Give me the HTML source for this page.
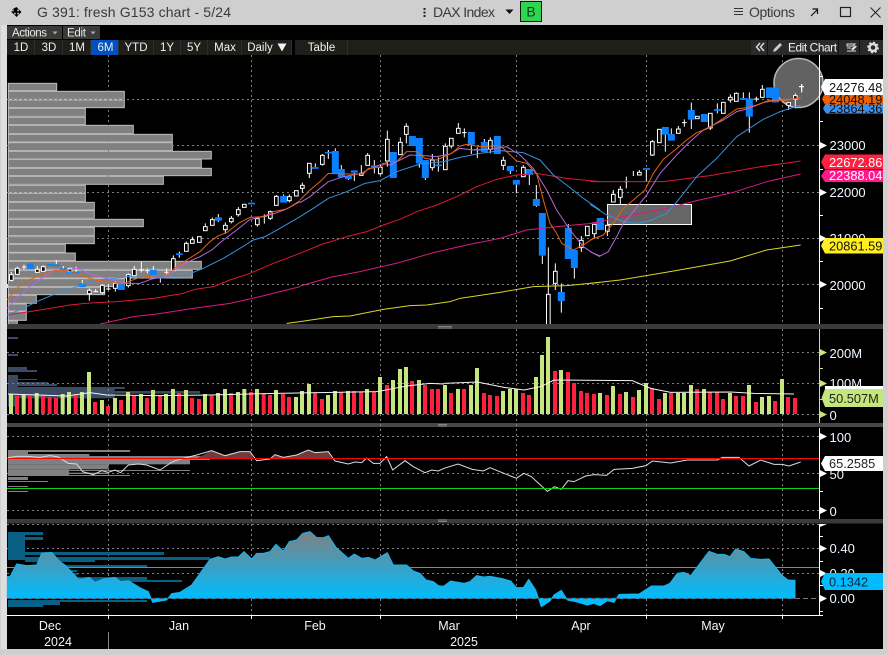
<!DOCTYPE html>
<html><head><meta charset="utf-8"><style>
html,body{margin:0;padding:0;background:#cfcfcf}
svg{display:block}
text{font-family:"Liberation Sans",Arial,sans-serif}
.tb{font-size:11.5px;fill:#f0f0f0;text-anchor:middle}
.ax{font-size:13px;fill:#eef6ff}
.dt{font-size:12.5px;fill:#f4f4f4;text-anchor:middle}
.tg{font-size:12.8px}
.gr line{stroke:#808080;stroke-width:1;stroke-dasharray:2 3}
g.h rect{fill:#000;stroke:#fff;stroke-width:3;width:11px}
.w{fill:none;stroke:#fff;stroke-width:3}
.b{fill:none;stroke:#0a80ff;stroke-width:21}
.bt{fill:none;stroke:#0a80ff;stroke-width:5}
.ma{fill:none;stroke-width:3;stroke-linejoin:round}
.o{stroke:#e8600c}.p{stroke:#b468dc}.u{stroke:#3a90dc}.r{stroke:#dc1838}.k{stroke:#d81a80}.y{stroke:#d8d820}
.pf rect{fill:#808080;stroke:#bcbcbc;stroke-width:3}
</style></head><body>
<svg width="888" height="655" viewBox="0 0 888 655" xmlns="http://www.w3.org/2000/svg">
<defs>
<linearGradient id="ag" gradientUnits="userSpaceOnUse" x1="0" y1="50" x2="0" y2="250"><stop offset="0" stop-color="#808080"/><stop offset="1" stop-color="#00bcff"/></linearGradient>
</defs>
<!-- window -->
<rect width="888" height="655" fill="#cfcfcf"/>
<rect x="1" y="25" width="6" height="624" fill="#dedede"/>
<rect x="7" y="25" width="876" height="624" fill="#000"/>
<!-- title bar -->
<g fill="#000"><path d="M16.5 7.5l2.5 2.6h-1.7v1.6h1.6V10l2.6 2.5L18.9 15v-1.7h-1.6v1.6h1.7l-2.5 2.6-2.5-2.6h1.7v-1.6h-1.6V15l-2.6-2.5L12.100 10v1.700h1.600V10h-1.700z" transform="translate(0 -.5)"/></g>
<text x="37" y="17" font-size="14" fill="#3a3a3a" textLength="194">G 391: fresh G153 chart - 5/24</text>
<rect x="423.500" y="8" width="2" height="2" fill="#222"/><rect x="423.500" y="11.500" width="2" height="2" fill="#222"/><rect x="423.500" y="15" width="2" height="2" fill="#222"/>
<text x="433" y="17" font-size="14" fill="#3a3a3a" textLength="62">DAX Index</text>
<path d="M505.500 9.500h8l-4 4.500z" fill="#111"/>
<rect x="520.500" y="1.500" width="21" height="20" fill="#2ed650" stroke="#0a1a0a"/>
<text x="531" y="16.500" font-size="14" fill="#1a3a20" text-anchor="middle">B</text>
<path d="M734 8.500h9M734 11.500h9M734 14.500h9" stroke="#333" stroke-width="1"/>
<text x="749" y="17" font-size="14" fill="#3a3a3a" textLength="46">Options</text>
<path d="M811 16l6-6M812.500 9h5v5" stroke="#111" fill="none" stroke-width="1.200"/>
<rect x="840.500" y="7.500" width="10" height="9" fill="none" stroke="#222" stroke-width="1.200"/>
<path d="M870.500 7.500l10 10M880.500 7.500l-10 10" stroke="#222" stroke-width="1"/>
<!-- toolbar row 1 -->
<rect x="7" y="26" width="55" height="13" fill="#3a3a3a"/><rect x="63" y="26" width="37" height="13" fill="#3a3a3a"/>
<text x="12" y="36.500" font-size="11.500" fill="#e8e8e8" textLength="35">Actions</text><path d="M52.500 31.500h5l-2.500 3z" fill="#aaa"/>
<text x="67" y="36.500" font-size="11.500" fill="#e8e8e8" textLength="19">Edit</text><path d="M90.500 31.500h5l-2.500 3z" fill="#aaa"/>
<!-- toolbar row 2 -->
<rect x="7" y="40" width="876" height="15" fill="#1e1e1a"/>
<rect x="91" y="40" width="28" height="15" fill="#0050c0"/>
<path d="M34.500 40v15M62.500 40v15M90.500 40v15M118.500 40v15M153.500 40v15M180.500 40v15M207.500 40v15M241.500 40v15M291.500 40v15M294.500 40v15M347.500 40v15" stroke="#2e2e2e"/>
<rect x="292" y="40" width="3" height="15" fill="#000"/>
<text class="tb" x="21" y="51">1D</text><text class="tb" x="49" y="51">3D</text><text class="tb" x="77" y="51">1M</text><text class="tb" x="105.500" y="51">6M</text><text class="tb" x="136" y="51">YTD</text><text class="tb" x="167" y="51">1Y</text><text class="tb" x="194" y="51">5Y</text><text class="tb" x="225" y="51">Max</text><text class="tb" x="260" y="51">Daily</text>
<path d="M277.500 43.500h9l-4.500 8z" fill="#f0f0f0"/>
<text class="tb" x="321.500" y="51">Table</text>
<rect x="751" y="40" width="132" height="15" fill="#2a2a28"/>
<path d="M767.500 40v15M838.500 40v15M859.500 40v15" stroke="#111"/>
<path d="M760 43l-3.500 4 3.500 4M764 43l-3.500 4 3.500 4" fill="none" stroke="#d8d8d8" stroke-width="1.500"/>
<path d="M773 52l1-3 6-6 2 2-6 6z" fill="#ccc"/>
<text x="788" y="51.500" font-size="11.800" fill="#f4f4f4" textLength="49">Edit Chart</text>
<path d="M847 44h8l-2 2h-6zM847 48h4M847 51h9" stroke="#ddd" fill="none"/><path d="M851 49l4-3.500 2 1-4 4z" fill="#ddd"/>
<circle cx="873" cy="47.500" r="3.500" fill="none" stroke="#ddd" stroke-width="2.500"/><circle cx="873" cy="47.500" r="5" fill="none" stroke="#ddd" stroke-width="1.800" stroke-dasharray="2 1.900"/>

<!-- MAIN PANE -->
<g class="pf" transform="translate(0 60) scale(.33333)">
<rect x="25" y="70" width="145" height="22"/><rect x="25" y="94" width="348" height="24"/><rect x="25" y="120" width="348" height="23"/><rect x="25" y="145" width="231" height="24"/><rect x="25" y="172" width="231" height="22"/><rect x="25" y="196" width="375" height="25"/><rect x="25" y="223" width="492" height="23"/><rect x="25" y="248" width="492" height="24"/><rect x="25" y="274" width="609" height="23"/><rect x="25" y="298" width="579" height="25"/><rect x="25" y="325" width="609" height="22"/><rect x="25" y="349" width="465" height="24"/><rect x="25" y="376" width="231" height="22"/><rect x="25" y="400" width="231" height="25"/><rect x="25" y="427" width="258" height="23"/><rect x="25" y="452" width="258" height="23"/><rect x="25" y="478" width="405" height="22"/><rect x="25" y="502" width="258" height="25"/><rect x="25" y="530" width="258" height="21"/><rect x="25" y="553" width="171" height="24"/><rect x="25" y="579" width="201" height="23"/><rect x="25" y="604" width="579" height="24"/><rect x="25" y="631" width="552" height="23"/><rect x="25" y="656" width="348" height="24"/><rect x="25" y="682" width="289" height="22"/><rect x="25" y="706" width="84" height="24"/><rect x="25" y="732" width="54" height="21"/><rect x="25" y="755" width="54" height="26"/><rect x="25" y="783" width="27" height="10"/>
</g>
<g class="gr">
<line x1="7" x2="819" y1="99.500" y2="99.500"/><line x1="7" x2="819" y1="145.500" y2="145.500"/><line x1="7" x2="819" y1="192.500" y2="192.500"/><line x1="7" x2="819" y1="238.500" y2="238.500"/><line x1="7" x2="819" y1="284.500" y2="284.500"/>
<line x1="108.500" x2="108.500" y1="55" y2="324"/><line x1="251.500" x2="251.500" y1="55" y2="324"/><line x1="380.500" x2="380.500" y1="55" y2="324"/><line x1="516.500" x2="516.500" y1="55" y2="324"/><line x1="646.500" x2="646.500" y1="55" y2="324"/><line x1="782.500" x2="782.500" y1="55" y2="324"/>
</g>
<rect x="607.500" y="204.500" width="84" height="20" fill="#666" stroke="#fff"/>
<circle cx="798.500" cy="83" r="24.500" fill="#626262" stroke="#b8b8b8" stroke-width="1.500"/>

<!-- candles A -->
<g transform="translate(0 60) scale(.33333)">
<path class="w" d="M22 672V684M34 636V664M52 620V643M72 614V628M66 621H80M112 618V637M130 616V634M169 600V612M190 618V630M228 620V640M247 660V670M268 685V722M287 687V697M280 695H294M307 672V702M325 672V690M318 687H332M346 665V695M385 640V683M403 618V647M424 605V637M418 630H432M442 625V640M436 632H448M460 618V630M481 655V668M500 625V645M493 637H506M520 586V632M538 575V593M559 545V574M577 530V550M616 490V512M637 473V496M655 462V486M676 487V521M694 468V490M715 441V470M772 470V500M793 463V491M786 469H800M811 452V480M829 405V436M851 403V408M868 403V427"/>
<path class="b" d="M91 610V627M364 673V690M460 630V645M655 472V482M851 408V428M247 670V681"/>
<path class="bt" d="M141 614.500H160M159 616.500H180M180 627.500H200M199 638H238M471 652.500H492M528 582.500H548M744 430.500H765"/>
<g class="h"><rect x="28.500" y="644" height="17"/><rect x="46.500" y="625" height="18"/><rect x="106.500" y="628" height="9"/><rect x="124.500" y="620" height="14"/><rect x="204.500" y="625" height="10"/><rect x="262.500" y="691" height="10"/><rect x="301.500" y="676" height="22"/><rect x="340.500" y="670" height="15"/><rect x="379.500" y="644" height="33"/><rect x="397.500" y="628" height="19"/><rect x="514.500" y="596" height="36"/><rect x="553.500" y="550" height="24"/><rect x="571.500" y="539" height="11"/><rect x="592.500" y="530" height="17"/><rect x="610.500" y="500" height="12"/><rect x="631.500" y="479" height="17"/><rect x="670.500" y="496" height="13"/><rect x="688.500" y="475" height="10"/><rect x="709.500" y="449" height="15"/><rect x="727.500" y="433" height="9"/><rect x="766.500" y="476" height="18"/><rect x="805.500" y="455" height="20"/><rect x="823.500" y="409" height="27"/><rect x="862.500" y="410" height="12"/><rect x="883.500" y="392" height="16"/></g>
</g>
<!-- candles B -->
<g transform="translate(300 60) scale(.33333)">
<path class="w" d="M7 368V398M28 310V354M46 310V321M67 282V317M85 270V297M106 265V273M124 315V327M145 357V360M163 338V363M184 315V340M203 279V316M223 300V340M241 315V346M262 212V320M280 354V354M301 232V284M319 190V250M358 310V323M376 354V360M397 282V332M415 292V335M436 250V329M454 235V265M475 189V220M493 205V232M486 218H500M514 254V282M532 262V294M553 237V246M571 232V280M610 290V330M631 333V342M649 374V400M670 315V350M688 345V375M709 375V441M727 587V612M745 562V795M766 610V690M784 670V758M805 492V503M823 624V656M844 528V576M883 521V534"/>
<path class="b" d="M106 273V340M124 327V352M145 348V357M163 331V338M280 276V354M337 228V258M358 234V310M376 300V354M514 216V254M553 246V276M592 228V282M631 318V333M649 360V374M688 327V345M709 417V438M727 459V587M784 696V723M805 503V597M823 570V624M901 474V510"/>
<path class="bt" d="M36 324H56M75 278H96M213 319H234M405 316H426M522 269H542"/>
<g class="h"><rect x="1.500" y="376" height="9"/><rect x="22.500" y="310" height="30"/><rect x="61.500" y="286" height="27"/><rect x="178.500" y="340" height="6"/><rect x="197.500" y="286" height="30"/><rect x="235.500" y="322" height="19"/><rect x="256.500" y="238" height="65"/><rect x="295.500" y="247" height="37"/><rect x="313.500" y="199" height="24"/><rect x="391.500" y="300" height="23"/><rect x="430.500" y="259" height="70"/><rect x="448.500" y="235" height="23"/><rect x="469.500" y="205" height="15"/><rect x="565.500" y="241" height="27"/><rect x="604.500" y="301" height="15"/><rect x="664.500" y="322" height="28"/><rect x="739.500" y="703" height="92"/><rect x="760.500" y="634" height="36"/><rect x="838.500" y="541" height="22"/><rect x="856.500" y="499" height="28"/><rect x="877.500" y="493" height="28"/></g>
</g>
<!-- candles C -->
<g transform="translate(590 60) scale(.33333)">
<path class="w" d="M52 514V528M70 390V403M91 378V435M109 350V385M102 365H116M130 333V348M148 330V345M169 329V365M187 240V288M226 224V275M244 205V222M265 198V207M283 178V200M276 188H290M304 128V207M322 169V176M361 204V210M382 130V160M421 103V128M439 97V100M460 97V115M478 97V218M499 110V125M492 117H506M517 75V88M596 136V150M616 100V145M635 72V97M627 80H642M556 110V127"/>
<path class="b" d="M31 474V510M226 201V224M244 222V242M304 150V179M343 162V186M478 115V170"/>
<path class="bt" d="M159 327H180M372 150H393M450 117H471"/>
<path d="M528 82h39v32h-39zM546 114h21v13h-21z" fill="#0a80ff"/>
<g class="h"><rect x="46.500" y="496" height="18"/><rect x="64.500" y="403" height="23"/><rect x="85.500" y="388" height="24"/><rect x="142.500" y="337" height="8"/><rect x="181.500" y="245" height="40"/><rect x="202.500" y="208" height="40"/><rect x="259.500" y="207" height="13"/><rect x="316.500" y="169" height="7"/><rect x="355.500" y="160" height="44"/><rect x="394.500" y="127" height="33"/><rect x="415.500" y="112" height="8"/><rect x="433.500" y="100" height="24"/><rect x="511.500" y="88" height="24"/><rect x="590.500" y="128" height="8"/><rect x="610.500" y="107" height="11"/></g>
</g>
<!-- MAs -->
<g transform="translate(0 60) scale(.33333)">
<polyline class="ma r" points="22,765 120,750 210,735 255,730 350,725 460,715 550,700 585,688 640,680 690,660 750,640 820,610 900,580"/>
<polyline class="ma k" points="300,792 400,770 470,762 580,745 690,730 780,710 900,680"/>
<polyline class="ma y" points="860,790 900,785"/>
<polyline class="ma u" points="22,765 70,745 110,725 170,700 230,680 290,660 340,655 385,650 440,652 500,652 560,645 610,625 670,595 720,565 760,540 795,530 840,505 900,470"/>
<polyline class="ma p" points="22,745 50,715 90,680 125,655 160,632 200,630 235,625 265,640 300,650 340,660 375,670 420,670 455,657 500,650 530,625 565,605 600,590 635,570 670,540 710,510 750,478 790,470 825,460 860,447 900,425"/>
<polyline class="ma o" points="22,720 50,685 75,665 110,650 150,635 180,630 215,635 250,648 285,660 325,665 365,672 385,665 420,652 460,648 500,645 530,620 560,600 600,575 630,545 655,527 680,518 715,490 750,472 790,470 820,455 860,447 900,422"/>
</g>
<g transform="translate(300 60) scale(.33333)">
<polyline class="ma r" points="0,580 60,555 140,530 200,515 250,495 300,478 350,455 410,435 470,410 530,380 590,358 650,345 710,340 800,355 900,365"/>
<polyline class="ma k" points="0,678 100,650 180,635 300,607 400,578 500,555 600,535 680,510 770,500 900,488"/>
<polyline class="ma y" points="0,785 100,770 150,768 250,748 330,737 380,735 450,725 480,715 600,697 700,680 800,677 900,667"/>
<polyline class="ma u" points="0,470 40,445 85,415 140,395 195,370 240,362 290,335 360,312 430,305 480,292 540,280 600,272 670,278 720,300 760,345 800,375 850,415 900,450"/>
<polyline class="ma p" points="0,428 30,410 60,385 85,365 130,350 185,340 205,328 250,310 270,315 310,295 330,285 370,287 410,290 450,282 480,265 520,270 570,268 620,260 660,285 700,325 740,390 770,450 810,510 850,560 880,580 900,590"/>
<polyline class="ma o" points="0,420 30,390 60,365 85,340 130,342 190,342 205,325 240,322 262,305 290,305 320,275 350,275 375,295 410,300 455,280 480,258 500,253 540,260 600,257 620,275 650,303 680,310 710,342 730,420 750,490 770,520 785,550 820,570 850,555 880,535 900,530"/>
</g>
<g transform="translate(590 60) scale(.33333)">
<polyline class="ma r" points="0,365 220,365 360,347 500,322 632,303"/>
<polyline class="ma k" points="0,490 100,470 220,447 320,422 430,397 530,365 632,342"/>
<polyline class="ma y" points="0,670 90,660 240,635 420,603 530,570 632,555"/>
<polyline class="ma u" points="0,433 50,465 100,485 140,490 180,482 230,460 265,420 320,350 380,295 440,230 520,178 570,155 632,135"/>
<polyline class="ma p" points="0,575 30,588 55,575 80,530 100,490 130,455 170,405 210,340 260,285 300,245 340,210 400,180 440,155 470,147 520,128 550,122 632,115"/>
<polyline class="ma o" points="0,540 40,525 70,490 100,445 130,420 165,390 190,340 220,298 255,270 290,240 320,218 355,205 400,175 440,147 470,143 500,135 540,120 580,122 632,113"/>
<path class="w" d="M635 72V97M627 80H642"/>
</g>

<!-- separators -->
<rect x="7" y="324" width="876" height="5" fill="#3a3a3a"/><rect x="7" y="423" width="876" height="4" fill="#484848"/><rect x="7" y="519" width="876" height="4.500" fill="#3a3a3a"/>
<path d="M438 326.500h14M438 328h14" stroke="#999" stroke-width=".8"/>
<path d="M438 424.500h9M438 426h9" stroke="#999" stroke-width=".8"/>
<path d="M438 520h9M438 521.500h9" stroke="#999" stroke-width=".8"/>

<!-- VOLUME -->
<g transform="translate(0 330) scale(.33333)" fill="#3a4a62">
<rect x="24" y="21" width="30" height="6"/><rect x="24" y="72" width="30" height="6"/><rect x="24" y="111" width="57" height="9"/><rect x="24" y="120" width="87" height="6"/><rect x="24" y="135" width="30" height="95"/><rect x="54" y="147" width="57" height="3"/><rect x="54" y="156" width="90" height="6"/><rect x="54" y="162" width="117" height="6"/><rect x="54" y="171" width="320" height="6"/><rect x="54" y="177" width="290" height="28"/><rect x="344" y="183" width="256" height="8"/>
</g>
<g class="gr">
<line x1="7" x2="819" y1="352.500" y2="352.500"/><line x1="7" x2="819" y1="383.500" y2="383.500"/><line x1="7" x2="819" y1="414.500" y2="414.500"/>
<line x1="7" x2="819" y1="436.500" y2="436.500"/><line x1="7" x2="819" y1="473.500" y2="473.500"/><line x1="7" x2="819" y1="510.500" y2="510.500"/>
<line x1="7" x2="819" y1="524.500" y2="524.500"/><line x1="7" x2="819" y1="548.500" y2="548.500"/><line x1="7" x2="819" y1="573.500" y2="573.500"/>
<line x1="108.500" x2="108.500" y1="329" y2="615"/><line x1="251.500" x2="251.500" y1="329" y2="615"/><line x1="380.500" x2="380.500" y1="329" y2="615"/><line x1="516.500" x2="516.500" y1="329" y2="615"/><line x1="646.500" x2="646.500" y1="329" y2="615"/><line x1="782.500" x2="782.500" y1="329" y2="615"/>
</g>
<g transform="translate(0 330) scale(.33333)" fill="none" stroke-width="12">
<path stroke="#c4e67c" d="M33 192V252M71 195V252M110 189V252M188 192V252M207 186V252M246 186V252M267 126V252M306 210V252M345 204V252M384 186V252M423 192V252M459 180V252M498 192V252M519 177V252M558 180V252M615 192V252M654 189V252M675 177V252M714 186V252M733 177V252M771 177V252M828 180V252M888 201V252M906 183V252M927 162V252M984 195V252M1005 183V252M1044 183V252M1101 177V252M1140 141V252M1179 150V252M1200 117V252M1218 111V252M1257 150V252"/>
<path stroke="#ff2040" d="M51 197V252M90 197V252M129 195V252M149 201V252M168 204V252M227 192V252M285 216V252M324 228V252M363 210V252M402 197V252M441 204V252M480 197V252M537 189V252M576 204V252M597 207V252M635 197V252M693 189V252M753 186V252M791 192V252M810 195V252M849 192V252M867 201V252M945 189V252M966 207V252M1023 186V252M1062 183V252M1083 186V252M1122 186V252M1161 165V252M1236 153V252M1275 165V252M1296 177V252M1314 177V252"/>
<polyline stroke="#f4f4f4" stroke-width="3" points="24,192 200,198 270,188 320,195 470,197 630,195 830,190 1000,187 1130,185 1220,168 1290,160 1332,162"/>
</g>
<g transform="translate(444 330) scale(.33333)" fill="none" stroke-width="12">
<path stroke="#c4e67c" d="M3 165V252M42 177V252M81 165V252M99 114V252M177 183V252M198 177V252M216 177V252M276 141V252M294 75V252M312 21V252M351 120V252M468 189V252M507 168V252M546 186V252M585 180V252M606 159V252M663 189V252M702 189V252M720 189V252M741 165V252M780 177V252M858 189V252M915 165V252M954 201V252M975 198V252M1014 147V252"/>
<path stroke="#ff2040" d="M21 189V252M60 177V252M120 189V252M138 195V252M159 198V252M237 189V252M255 195V252M333 123V252M372 126V252M390 159V252M411 183V252M429 189V252M450 192V252M489 195V252M528 192V252M567 201V252M624 174V252M645 207V252M681 189V252M759 177V252M798 186V252M819 186V252M837 207V252M876 198V252M897 198V252M936 216V252M993 213V252M1032 201V252M1053 204V252"/>
<polyline stroke="#f4f4f4" stroke-width="3" points="0,160 100,156 180,172 240,180 290,170 330,150 565,152 620,175 680,187 860,186 930,190 1050,192"/>
</g>

<!-- RSI -->
<g transform="translate(0 330) scale(.33333)" fill="#808080">
<rect x="24" y="360" width="60" height="18"/><rect x="84" y="360" width="306" height="6"/><rect x="84" y="372" width="184" height="6"/><rect x="24" y="378" width="606" height="12"/><rect x="24" y="390" width="546" height="13"/><rect x="24" y="403" width="302" height="15"/><rect x="24" y="418" width="183" height="20"/><rect x="207" y="420" width="363" height="3"/><rect x="207" y="428" width="119" height="4"/><rect x="207" y="435" width="183" height="3"/><rect x="24" y="441" width="60" height="9"/><rect x="24" y="453" width="120" height="3"/><rect x="24" y="468" width="60" height="3"/><rect x="24" y="483" width="60" height="3"/>
<polygon fill="#6e3c3c" points="590,385 635,362 675,377 720,365 750,365 760,385"/>
<polygon fill="#6e3c3c" points="815,385 825,374 850,382 890,375 925,360 945,368 985,365 995,385"/>
<polyline fill="none" stroke="#dcdcdc" stroke-width="3" points="24,383 50,379 84,379 120,382 150,377 175,381 205,400 230,402 248,425 280,434 305,422 325,427 345,420 362,428 385,405 415,402 440,405 480,420 510,400 525,392 550,385 590,375 635,362 675,377 720,365 750,365 770,392 810,387 825,374 850,382 890,375 925,360 945,368 985,365 1005,393 1045,402 1065,396 1085,398 1100,384 1120,400 1140,400 1160,380 1178,420 1215,392 1240,410 1275,428 1295,420 1315,423 1332,415"/>
</g>
<g transform="translate(444 330) scale(.33333)">
<polyline fill="none" stroke="#dcdcdc" stroke-width="3" points="0,415 42,402 85,418 118,423 138,413 175,428 217,445 240,430 262,440 310,484 332,470 352,478 372,452 390,455 425,438 450,434 488,436 510,418 565,415 606,407 625,393 680,399 730,390 820,390 835,382 885,382 915,408 950,390 990,403 1015,403 1035,408 1070,396"/>
</g>
<line x1="7" x2="819" y1="458.500" y2="458.500" stroke="#f00a0a"/>
<line x1="7" x2="819" y1="488.500" y2="488.500" stroke="#10d010"/>

<!-- BOTTOM -->
<g transform="translate(0 515) scale(.33333)" fill="#0a5f85">
<rect x="24" y="51" width="105" height="9"/><rect x="24" y="60" width="51" height="75"/><rect x="75" y="66" width="54" height="9"/><rect x="75" y="111" width="417" height="9"/><rect x="75" y="126" width="555" height="9"/><rect x="75" y="135" width="210" height="6"/><rect x="100" y="150" width="341" height="7"/><rect x="100" y="165" width="132" height="6"/><rect x="180" y="174" width="52" height="6"/><rect x="180" y="186" width="261" height="9"/><rect x="180" y="195" width="366" height="6"/><rect x="24" y="255" width="417" height="6"/><rect x="24" y="261" width="156" height="9"/><rect x="24" y="270" width="105" height="6"/>
<polygon fill="url(#ag)" stroke="#14b4f0" stroke-width="3" stroke-linejoin="round" points="22,250 22,185 30,185 50,147 80,152 110,150 125,115 155,112 180,140 195,150 235,192 250,192 268,187 285,202 310,192 345,187 362,200 385,197 420,218 445,230 458,262 500,255 515,236 540,232 575,210 630,133 655,125 675,132 695,126 715,126 732,110 755,132 770,115 790,115 810,110 828,88 850,108 868,80 890,75 908,55 930,50 950,68 970,68 985,62 1008,97 1045,130 1063,117 1085,130 1105,127 1125,135 1162,113 1180,150 1220,150 1240,168 1260,175 1278,195 1300,200 1315,212 1335,215 1335,250"/>
</g>
<g transform="translate(444 515) scale(.33333)">
<polygon fill="url(#ag)" stroke="#14b4f0" stroke-width="3" stroke-linejoin="round" points="-3,250 -3,215 20,198 60,205 78,200 98,182 118,186 138,184 175,191 200,198 217,218 238,218 254,193 275,225 292,275 318,258 330,240 352,226 370,255 395,260 430,270 450,265 468,272 490,257 510,262 525,238 585,237 622,213 660,213 678,205 700,175 720,172 740,182 795,109 820,118 840,118 858,125 875,102 900,110 920,130 950,133 975,132 1015,182 1032,195 1053,196 1053,250"/>
</g>
<line x1="7" x2="795" y1="598.500" y2="598.500" stroke="#555" stroke-dasharray="5 3"/>
<line x1="795" x2="819" y1="598.500" y2="598.500" stroke="#777" stroke-dasharray="5 3"/>
<line x1="7" x2="819" y1="567.500" y2="567.500" stroke="#28c828"/>
<line x1="7" x2="820" y1="615.500" y2="615.500" stroke="#fff"/>

<!-- axes -->
<path d="M819.500 55V324M819.500 428V519M819.500 524V616" stroke="#fff"/>
<path d="M819.500 329V423" stroke="#c4e67c"/>
<path d="M820 121.500h3M820 169.500h3M820 215.500h3M820 261.500h3M820 308.500h3M820 76.500h3M820 615.500h3M820 536.500h3M820 561.500h3M820 585.500h3M820 611.500h3M820 491.500h3" stroke="#fff"/>
<path d="M820 368.500h3M820 399.500h3" stroke="#c4e67c"/>
<g fill="#fff">
<path d="M820 142l7 3.500-7 3.500zM820 189l7 3.500-7 3.500zM820 235l7 3.500-7 3.500zM820 281l7 3.500-7 3.500zM820 433l7 3.500-7 3.500zM820 470l7 3.500-7 3.500zM820 507l7 3.500-7 3.500zM820 545l7 3.500-7 3.500zM820 570l7 3.500-7 3.500zM820 595l7 3.500-7 3.500zM820 525v-1h7l-7 3z"/>
</g>
<path d="M820 349l7 3.500-7 3.500zM820 380l7 3.500-7 3.500zM820 411l7 3.500-7 3.500z" fill="#c4e67c"/>
<text class="ax" x="829.500" y="150">23000</text>
<text class="ax" x="829.500" y="197">22000</text>
<text class="ax" x="829.500" y="243">21000</text>
<text class="ax" x="829.500" y="290">20000</text>
<text class="ax" x="829.500" y="358">200M</text>
<text class="ax" x="829.500" y="388">100M</text>
<text class="ax" x="829.500" y="420">0</text>
<text class="ax" x="829.500" y="442">100</text>
<text class="ax" x="829.500" y="479">50</text>
<text class="ax" x="829.500" y="516">0</text>
<text class="ax" x="829.500" y="553">0.40</text>
<text class="ax" x="829.500" y="578">0.20</text>
<text class="ax" x="829.500" y="603">0.00</text>

<!-- tags -->
<path d="M826 103h57v10.500h-57l-3-5z" fill="#3a90f0"/><text class="tg" x="829" y="113" fill="#111">23864.36</text>
<path d="M825 93h58v11.500h-58l-3-5.500z" fill="#f06000"/><text class="tg" x="829" y="104" fill="#111">24048.19</text>
<path d="M825 79h58v16h-58l-4-8z" fill="#fff"/><text class="tg" x="829" y="92" fill="#111">24276.48</text>
<path d="M825 154.500h58v15h-58l-4-7.500z" fill="#ff2040"/><text class="tg" x="829" y="167" fill="#fff">22672.86</text>
<path d="M825 170h58v12h-58l-4-6z" fill="#ff1a8c"/><text class="tg" x="829" y="180" fill="#fff">22388.04</text>
<path d="M825 238h58v15.500h-58l-4-7.700z" fill="#ffee20"/><text class="tg" x="829" y="250.500" fill="#111">20861.59</text>
<path d="M825 386h58v4h-58z" fill="#fff"/>
<path d="M825 389h58v18h-58l-3.500-9z" fill="#c4e67c"/><text class="tg" x="829" y="403" fill="#222">50.507M</text>
<path d="M825 456h58v15h-58l-4-7.500z" fill="#fff"/><text class="tg" x="829" y="468" fill="#222">65.2585</text>
<path d="M825 573h58v17h-58l-4-8.500z" fill="#00bcff"/><text class="tg" x="829" y="586.500" fill="#123">0.1342</text>

<!-- date axis -->
<path d="M108.500 615v4M251.500 615v4M380.500 615v4M516.500 615v4M646.500 615v4M782.500 615v4" stroke="#fff"/>
<line x1="108.500" x2="108.500" y1="632" y2="649" stroke="#888"/>
<text class="dt" x="50" y="630">Dec</text><text class="dt" x="179" y="630">Jan</text><text class="dt" x="315" y="630">Feb</text><text class="dt" x="449" y="630">Mar</text><text class="dt" x="581" y="630">Apr</text><text class="dt" x="713" y="630">May</text>
<text class="dt" x="58" y="646">2024</text><text class="dt" x="464" y="646">2025</text>
</svg>
</body></html>
